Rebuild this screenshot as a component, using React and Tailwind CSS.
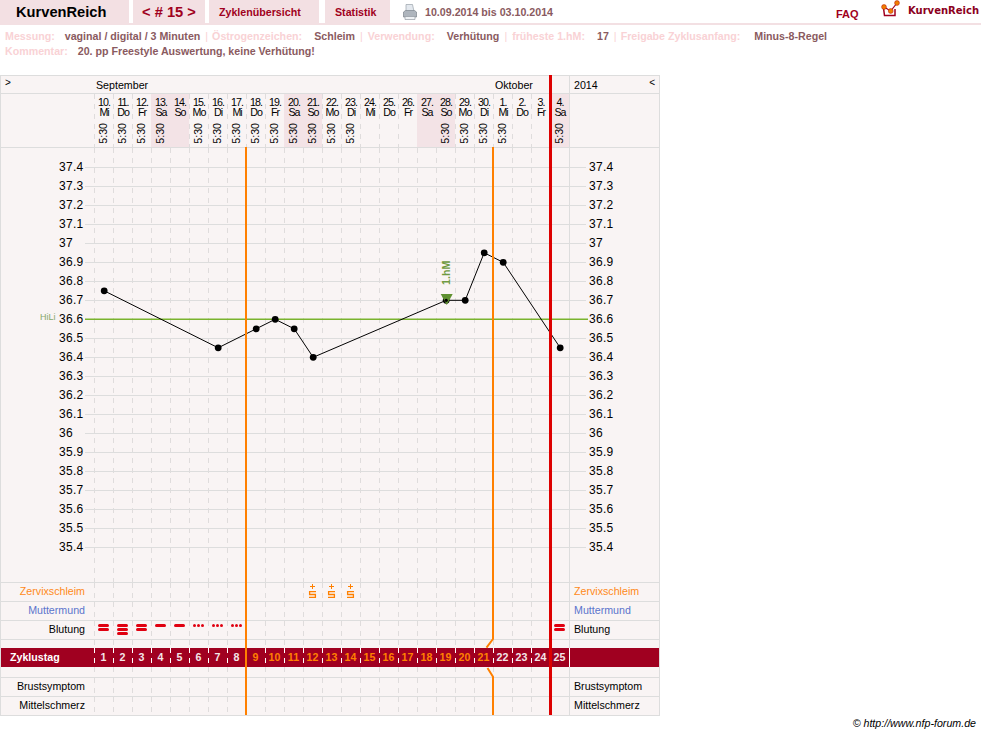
const days = [
  ['10.', 'Mi', 1], ['11.', 'Do', 1], ['12.', 'Fr', 1], ['13.', 'Sa', 1], ['14.', 'So', 0],
  ['15.', 'Mo', 1], ['16.', 'Di', 1], ['17.', 'Mi', 1], ['18.', 'Do', 1], ['19.', 'Fr', 1],
  ['20.', 'Sa', 1], ['21.', 'So', 1], ['22.', 'Mo', 1], ['23.', 'Di', 1], ['24.', 'Mi', 0],
  ['25.', 'Do', 0], ['26.', 'Fr', 0], ['27.', 'Sa', 0], ['28.', 'So', 1], ['29.', 'Mo', 1],
  ['30.', 'Di', 1], ['1.', 'Mi', 1], ['2.', 'Do', 0], ['3.', 'Fr', 0], ['4.', 'Sa', 1],
];

const temps = ['37.4', '37.3', '37.2', '37.1', '37', '36.9', '36.8', '36.7', '36.6', '36.5', '36.4', '36.3', '36.2', '36.1', '36', '35.9', '35.8', '35.7', '35.6', '35.5', '35.4'];

// Messpunkte: Spaltenindex und Temperatur
const points = [[0, 36.75], [6, 36.45], [8, 36.55], [9, 36.6], [10, 36.55], [11, 36.4], [18, 36.7], [19, 36.7], [20, 36.95], [21, 36.9], [24, 36.45]];

const blood = { 0: 2, 1: 3, 2: 2, 3: 1, 4: 1, 5: 'd', 6: 'd', 7: 'd', 24: 2 };

const dash = 'bg-[linear-gradient(#dfdcdc_5px,transparent_5px)] bg-[length:1px_10px] bg-repeat-y bg-left-top';
const dashWhite = 'bg-[linear-gradient(#ffffff_5px,transparent_5px)] bg-[length:1px_10px] bg-repeat-y bg-left-top';

function isWeekend(d) {
  return d[1] === 'Sa' || d[1] === 'So';
}

function BloodMark({ kind }) {
  if (kind === 'd') {
    return (
      <div className="flex gap-[1px] pt-[3px]">
        <span className="w-[3px] h-[3px] rounded-full bg-[#e00010]" />
        <span className="w-[3px] h-[3px] rounded-full bg-[#e00010]" />
        <span className="w-[3px] h-[3px] rounded-full bg-[#e00010]" />
      </div>
    );
  }
  return (
    <div className="flex flex-col gap-[1px] pt-[3px]">
      {Array.from({ length: kind }).map((_, i) => (
        <span key={i} className="block w-[11px] h-[3px] rounded-full bg-[#e00010]" />
      ))}
    </div>
  );
}

function MucusMark() {
  return (
    <svg width="9" height="15" viewBox="0 0 9 15" className="block text-[#ff8000]">
      <path d="M4.5 0v5M2 2.5h5" stroke="currentColor" strokeWidth="1" fill="none" />
      <path d="M8 7.6H1.6V10.5H7.4V13.4H1" stroke="currentColor" strokeWidth="1.3" fill="none" />
    </svg>
  );
}

function DayCells({ render, white }) {
  return (
    <div className="flex w-[475px] h-full shrink-0">
      {days.map((d, i) => (
        <div key={i} className={`w-[19px] h-full flex justify-center ${white ? dashWhite : dash}`}>
          {render ? render(i) : null}
        </div>
      ))}
    </div>
  );
}

function Row({ left, right, leftClass, render }) {
  return (
    <div className="flex h-[19px] border-b border-[#dddddd]">
      <div className={`w-[93px] pr-[9px] text-right text-[10.67px] leading-[16px] ${leftClass || 'text-black'}`}>{left}</div>
      <DayCells render={render} />
      <div className={`flex-1 border-l border-[#dddddd] pl-[4px] text-[10.67px] leading-[16px] ${leftClass || 'text-black'}`}>{right}</div>
    </div>
  );
}

function Logo() {
  return (
    <svg width="20" height="18" viewBox="0 0 20 18" className="block">
      <path d="M3.5 8L4.5 15.5H15V9" stroke="#a00020" strokeWidth="1.5" fill="none" />
      <path d="M4 7l6.7 4L17 3" stroke="#a00020" strokeWidth="1.2" fill="none" />
      <circle cx="4" cy="7" r="2.4" fill="#f08000" stroke="#c02010" strokeWidth="0.6" />
      <circle cx="10.7" cy="11" r="2.4" fill="#f08000" stroke="#c02010" strokeWidth="0.6" />
      <circle cx="17" cy="3" r="2.4" fill="#f08000" stroke="#c02010" strokeWidth="0.6" />
    </svg>
  );
}

function Printer() {
  return (
    <svg width="14" height="16" viewBox="0 0 14 16" className="block">
      <path d="M3 0.5h6.5l1.5 7h-8z" fill="#e3e8ee" stroke="#9aa2aa" strokeWidth="0.7" />
      <path d="M0.5 8l2-1.5h9l2 1.5v5h-13z" fill="#aeb5bd" stroke="#7d848c" strokeWidth="0.7" />
      <path d="M2 12.5h10v3h-10z" fill="#eef1f4" stroke="#959ca4" strokeWidth="0.7" />
    </svg>
  );
}

export default function App() {
  const toX = (i) => 10.2 + i * 19;
  const toY = (t) => 19.3 + (37.4 - t) * 190;
  const line = points.map(([i, t]) => `${toX(i)},${toY(t)}`).join(' ');

  return (
    <div className="w-[981px] h-[735px] bg-white overflow-hidden font-['Liberation_Sans',Arial,sans-serif] text-black">
      {/* Kopfleiste */}
      <div className="flex h-[25px] border-b-[2px] border-[#f3e0e3] items-stretch whitespace-nowrap">
        <div className="shrink-0 w-[129px] bg-[#f3e0e3] pl-[16px] text-[14.67px] font-bold leading-[25px]">KurvenReich</div>
        <div className="shrink-0 ml-[4px] w-[72px] bg-[#f3e0e3] text-center text-[14.67px] font-bold leading-[25px] text-[#a00020]">&lt; # 15 &gt;</div>
        <div className="shrink-0 ml-[4px] w-[110px] bg-[#f3e0e3] pl-[10px] text-[10.67px] font-bold leading-[24px] text-[#a00020]">Zyklenübersicht</div>
        <div className="shrink-0 ml-[6px] w-[65px] bg-[#f3e0e3] pl-[10px] text-[10.67px] font-bold leading-[24px] text-[#a00020]">Statistik</div>
        <div className="shrink-0 ml-[13px] pt-[4px]"><Printer /></div>
        <div className="shrink-0 ml-[8px] w-[128px] text-[10.67px] font-bold leading-[24px] text-[#8a5a60]">10.09.2014 bis 03.10.2014</div>
        <div className="shrink-0 ml-[283px] w-[22px] pt-[2px] text-[11px] font-bold leading-[24px] text-[#a00020]">FAQ</div>
        <div className="shrink-0 ml-[22px] flex">
          <Logo />
          <span className="ml-[8px] pt-[1px] text-[10px] font-bold leading-[19px] text-[#8b0020] font-['DejaVu_Sans',sans-serif]">KurvenReich</span>
        </div>
      </div>

      {/* Angaben zum Zyklus */}
      <div className="h-[50px] pt-[4px] pl-[5px] text-[10.67px] font-bold leading-[15px] text-[#f9d2d5]">
        <div className="flex whitespace-nowrap">
          <span>Messung:</span>
          <span className="ml-[10px] text-[#8a5a60]">vaginal / digital / 3 Minuten</span>
          <span className="ml-[5px] font-normal">|</span>
          <span className="ml-[4px]">Östrogenzeichen:</span>
          <span className="ml-[12px] text-[#8a5a60]">Schleim</span>
          <span className="ml-[5px] font-normal">|</span>
          <span className="ml-[5px]">Verwendung:</span>
          <span className="ml-[12px] text-[#8a5a60]">Verhütung</span>
          <span className="ml-[5px] font-normal">|</span>
          <span className="ml-[5px]">früheste 1.hM:</span>
          <span className="ml-[12px] text-[#8a5a60]">17</span>
          <span className="ml-[5px] font-normal">|</span>
          <span className="ml-[4px]">Freigabe Zyklusanfang:</span>
          <span className="ml-[14px] text-[#8a5a60]">Minus-8-Regel</span>
        </div>
        <div className="flex">
          <span>Kommentar:</span>
          <span className="ml-[10px] text-[#8a5a60]">20. pp Freestyle Auswertung, keine Verhütung!</span>
        </div>
      </div>

      {/* Kurvenblatt */}
      <div className="relative w-[660px] h-[641px] bg-[#f9f4f4] border border-[#dddddd]">
        <div className="flex h-[18px] border-b border-[#dddddd] text-[10.67px] leading-[18px]">
          <div className="w-[93px] pl-[4px] text-[10px] leading-[14px]">&gt;</div>
          <div className="w-[399px] pl-[2px]">September</div>
          <div className="w-[76px] pl-[2px]">Oktober</div>
          <div className="flex-1 flex justify-between border-l border-[#dddddd] pl-[4px] pr-[4px]">
            <span>2014</span>
            <span className="text-[10px] leading-[14px]">&lt;</span>
          </div>
        </div>

        <div className="flex h-[54px] border-b border-[#dddddd]">
          <div className="w-[93px]" />
          <div className="flex w-[475px] shrink-0">
            {days.map((d, i) => (
              <div key={i} className={`relative w-[19px] ${isWeekend(d) ? 'bg-[#f3e3e6]' : dash}`}>
                <div className="pt-[3px] pl-[1px] text-center text-[10.67px] leading-[10px] tracking-[-1px]">
                  <div>{d[0]}</div>
                  <div>{d[1]}</div>
                </div>
                {d[2] ? (
                  <div className="absolute bottom-[3px] left-[3px] [writing-mode:vertical-rl] rotate-180 text-[10.67px] leading-[13px]">5:30</div>
                ) : null}
              </div>
            ))}
          </div>
          <div className="flex-1 border-l border-[#dddddd]" />
        </div>

        {/* Temperaturbereich */}
        <div className="relative flex h-[435px] border-b border-[#dddddd]">
          <div className="w-[93px] pt-[10px]">
            {temps.map((t) => (
              <div key={t} className="flex items-center h-[19px]">
                <span className="w-[84px] pl-[58px] pb-[2px] text-[12px] tracking-[0.3px] whitespace-nowrap">{t}</span>
                <span className="flex-1 border-t border-[#dddddd]" />
              </div>
            ))}
          </div>
          <div className="relative w-[475px] shrink-0 pt-[10px]">
            <div className="absolute inset-0"><DayCells /></div>
            {temps.map((t) => (
              <div key={t} className="relative flex items-center h-[19px]">
                <span className="w-full border-t border-[#dddddd]" />
              </div>
            ))}
            <svg className="absolute top-0 left-0 overflow-visible" width="475" height="434">
              <rect x="-9" y="170.5" width="503" height="1.5" fill="#7ab32e" />
              <polyline points={line} fill="none" stroke="#000" strokeWidth="1" />
              {points.map(([i, t]) => (
                <circle key={i} cx={toX(i)} cy={toY(t)} r="3.4" fill="#000" />
              ))}
              <path d="M346.7 146h12l-6 11z" fill="#5f9030" />
              <circle cx={toX(18)} cy={toY(36.7)} r="1.6" fill="#000" />
              <text transform="translate(356 137) rotate(-90)" fontSize="10.67" fontWeight="700" fill="#6f9a40">1.hM</text>
            </svg>
          </div>
          <div className="flex-1 border-l border-[#dddddd] pt-[10px]">
            {temps.map((t) => (
              <div key={t} className="flex items-center h-[19px]">
                <span className="w-[16px] border-t border-[#dddddd]" />
                <span className="ml-[3px] pb-[2px] text-[12px] tracking-[0.3px]">{t}</span>
              </div>
            ))}
          </div>
          <div className="absolute left-[39px] top-[162px] text-[9px] leading-[14px] text-[#86a86a]">HiLi</div>
        </div>

        <Row
          left="Zervixschleim"
          right="Zervixschleim"
          leftClass="text-[#ff8a1a]"
          render={(i) => (i === 11 || i === 12 || i === 13 ? <div className="pt-[1px]"><MucusMark /></div> : null)}
        />
        <Row left="Muttermund" right="Muttermund" leftClass="text-[#5b75cc]" />
        <Row
          left="Blutung"
          right="Blutung"
          render={(i) => (blood[i] ? <BloodMark kind={blood[i]} /> : null)}
        />

        <div className="flex h-[8px]">
          <div className="w-[93px]" />
          <DayCells />
          <div className="flex-1 border-l border-[#dddddd]" />
        </div>

        <div className="flex h-[19px] bg-[#a00020] text-[10.67px] font-bold leading-[19px] text-white">
          <div className="w-[93px] pl-[9px]">Zyklustag</div>
          <div className="flex w-[475px] shrink-0">
            {days.map((d, i) => (
              <div key={i} className={`w-[19px] text-center ${dashWhite} ${i >= 8 && i <= 20 ? 'text-[#ff8000]' : 'text-[#f4e6e8]'}`}>
                {i + 1}
              </div>
            ))}
          </div>
          <div className="flex-1 border-l border-white" />
        </div>

        <div className="flex h-[11px] border-b border-[#dddddd]">
          <div className="w-[93px]" />
          <DayCells />
          <div className="flex-1 border-l border-[#dddddd]" />
        </div>

        <Row left="Brustsymptom" right="Brustsymptom" />
        <Row left="Mittelschmerz" right="Mittelschmerz" />

        {/* Zyklusgrenzen liegen über dem Blatt */}
        <svg className="absolute left-0 top-0 pointer-events-none overflow-visible" width="658" height="639">
          <path d="M245 71V639" stroke="#ff8000" strokeWidth="2" fill="none" />
          <path d="M492 71V563L485.5 571.7M486.5 592L492 600.7V639" stroke="#ff8000" strokeWidth="2" fill="none" />
          <path d="M549.5 -1V639" stroke="#dd0000" strokeWidth="3" fill="none" />
        </svg>
      </div>

      <div className="pr-[5px] text-right text-[10.67px] italic leading-[14px]">© http://www.nfp-forum.de</div>
    </div>
  );
}
